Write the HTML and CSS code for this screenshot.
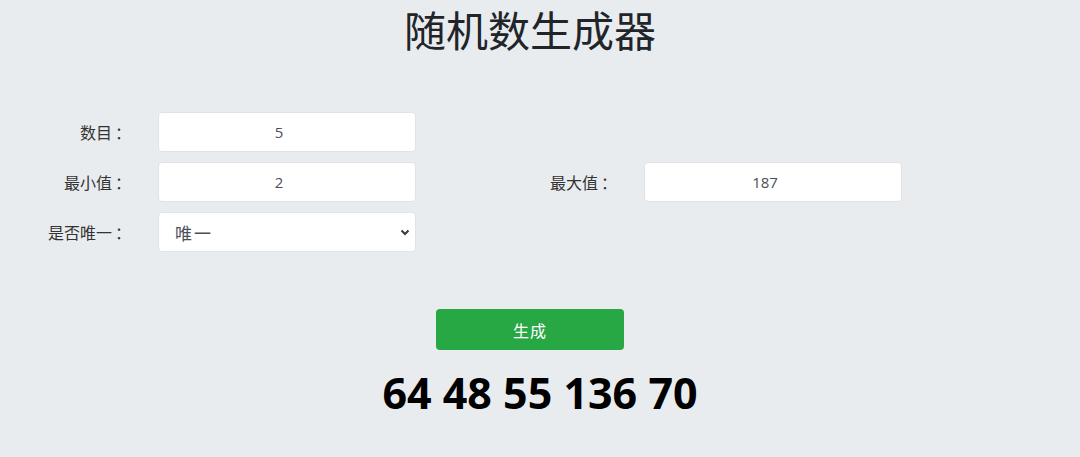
FILE: index.html
```html
<!DOCTYPE html>
<html lang="zh-CN">
  <head>
    <meta charset="UTF-8" />
    <title>随机数生成器</title>
    <link rel="stylesheet" href="styles.css">
  </head>
  <body>
    <h1 class="title">随机数生成器</h1>

    <div class="form">
      <label class="label" for="count">数目<span class="colon">：</span></label>
      <div class="cell"><input class="field" id="count" type="text" value="5" /></div>

      <label class="label" for="min">最小值<span class="colon">：</span></label>
      <div class="cell"><input class="field" id="min" type="text" value="2" /></div>
      <label class="label second" for="max">最大值<span class="colon">：</span></label>
      <div class="cell"><input class="field" id="max" type="text" value="187" /></div>

      <label class="label" for="unique">是否唯一<span class="colon">：</span></label>
      <div class="cell">
        <div class="select-wrap">
          <select class="field select" id="unique">
            <option>唯一</option>
            <option>不唯一</option>
          </select>
          <svg class="chevron" width="10" height="7" viewBox="0 0 10 7">
            <path d="M1.5 1.5 L5 5 L8.5 1.5" fill="none" stroke="#343a40" stroke-width="2" />
          </svg>
        </div>
      </div>
    </div>

    <div class="actions">
      <button class="btn" type="button">生成</button>
    </div>

    <div class="result">64 48 55 136 70</div>
  </body>
</html>
```

FILE: styles.css
```css
body {
  margin: 0;
  background: #e9ecef;
  font-family: "Open Sans", "Noto Sans CJK SC", sans-serif;
  color: #212529;
}

.title {
  margin: 4px 0 0;
  padding-right: 20px;
  text-align: center;
  font-family: "Noto Sans CJK SC", sans-serif;
  font-size: 42px;
  font-weight: 400;
  line-height: 50px;
  color: #212529;
}

.form {
  display: grid;
  grid-template-columns: 143px 288px 55px 143px 288px;
  grid-auto-rows: 40px;
  row-gap: 10px;
  margin-top: 58px;
}

.label {
  grid-column: 1;
  padding-right: 15px;
  text-align: right;
  font-family: "Noto Sans CJK SC", sans-serif;
  font-size: 16px;
  line-height: 40px;
  color: #333;
}

/* centred full-width colon, like the reference font */
.colon {
  font-family: "Noto Sans CJK JP", sans-serif;
  margin-left: 3px;
  margin-right: -3px;
}

.label.second {
  grid-column: 4;
}

.cell {
  padding: 0 15px;
}

.field {
  box-sizing: border-box;
  width: 100%;
  height: 40px;
  padding: 0 28px 0 12px;
  border: 1px solid #dfe2e6;
  border-radius: 4px;
  background: #fff;
  font-family: "Open Sans", "Noto Sans CJK SC", sans-serif;
  font-size: 15px;
  color: #495057;
  text-align: center;
  outline: none;
}

.select-wrap {
  position: relative;
}

.select {
  appearance: none;
  -webkit-appearance: none;
  text-align: left;
  padding-left: 16px;
  font-family: "Noto Sans CJK SC", sans-serif;
  font-size: 17px;
  letter-spacing: 2px;
}

.chevron {
  position: absolute;
  right: 6px;
  top: 17px;
  pointer-events: none;
}

.actions {
  padding-right: 20px;
  margin-top: 57px;
  text-align: center;
}

.btn {
  width: 188px;
  height: 41px;
  border: none;
  border-radius: 4px;
  background: #28a745;
  color: #fff;
  font-family: "Noto Sans CJK SC", sans-serif;
  font-size: 16px;
  letter-spacing: 1px;
  cursor: pointer;
}

.result {
  margin-top: 19px;
  text-align: center;
  font-family: "Open Sans", sans-serif;
  font-size: 43px;
  font-weight: 700;
  line-height: 48px;
  color: #000;
}
```
